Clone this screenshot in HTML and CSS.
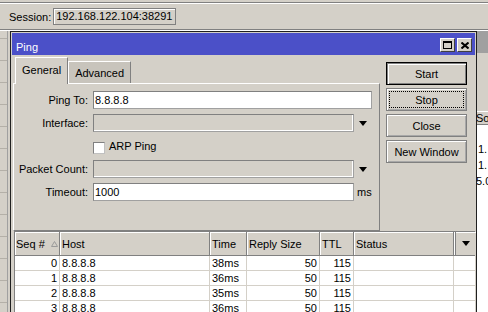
FILE: index.html
```html
<!doctype html>
<html>
<head>
<meta charset="utf-8">
<meta name="viewport" content="width=device-width,initial-scale=1">
<title>Ping</title>
<link rel="stylesheet" href="styles.css">
</head>
<body>
<div class="menubar"></div>
<div class="toolbar">
  <span class="session-label">Session:</span>
  <span class="session">192.168.122.104:38291</span>
</div>
<div class="desk">
  <div class="side-left">
    <div class="side-item first"></div>
    <div class="side-item"></div>
    <div class="side-item"></div>
    <div class="side-item"></div>
    <div class="side-item"></div>
    <div class="side-item"></div>
    <div class="side-item"></div>
    <div class="side-item"></div>
    <div class="side-item"></div>
    <div class="side-item"></div>
    <div class="side-item"></div>
    <div class="side-item"></div>
    <div class="side-item"></div>
  </div>
  <div class="side-right">
    <div class="bg-title"></div>
    <div class="bg-gap"></div>
    <div class="bg-head">Sou</div>
    <div class="bg-list">
      <div class="bg-row"></div>
      <div class="bg-row">1.</div>
      <div class="bg-row">1.</div>
      <div class="bg-row cut">5.0</div>
    </div>
  </div>

  <div class="win">
    <div class="titlebar">
      <span class="title">Ping</span>
      <span class="tbtn">
        <svg width="9" height="8" viewBox="0 0 9 8"><rect x="0.5" y="0.5" width="8" height="7" fill="none" stroke="#000"/><rect x="0" y="0" width="9" height="2" fill="#000"/></svg>
      </span>
      <span class="tbtn">
        <svg width="8" height="7" viewBox="0 0 8 7"><path d="M0.5 0.5 L7.5 6.5 M7.5 0.5 L0.5 6.5" stroke="#000" stroke-width="2"/></svg>
      </span>
    </div>
    <div class="win-body">
      <div class="top">
        <div class="tabs-area">
          <div class="tabs">
            <span class="tab active">General</span>
            <span class="tab">Advanced</span>
          </div>
          <div class="panel">
            <div class="frow">
              <label>Ping To:</label>
              <div class="field long">8.8.8.8</div>
            </div>
            <div class="frow">
              <label>Interface:</label>
              <div class="field off"></div>
              <span class="drop"></span>
            </div>
            <div class="frow">
              <label></label>
              <span class="check"></span>
              <span class="check-text">ARP Ping</span>
            </div>
            <div class="frow">
              <label>Packet Count:</label>
              <div class="field off"></div>
              <span class="drop"></span>
            </div>
            <div class="frow">
              <label>Timeout:</label>
              <div class="field">1000</div>
              <span class="unit">ms</span>
            </div>
          </div>
        </div>
        <div class="buttons">
          <div class="btn default">Start</div>
          <div class="btn focus">Stop</div>
          <div class="btn">Close</div>
          <div class="btn">New Window</div>
        </div>
      </div>

      <div class="grid">
        <div class="thead">
          <div class="th">Seq #
            <svg class="sort" width="7" height="6" viewBox="0 0 7 6"><path d="M3.5 0.5 L6.5 5.5 L0.5 5.5 Z" fill="#d4d0c8" stroke="#9a9a9a"/></svg>
          </div>
          <div class="th">Host</div>
          <div class="th">Time</div>
          <div class="th">Reply Size</div>
          <div class="th">TTL</div>
          <div class="th">Status</div>
          <div class="th last"><span class="drop"></span></div>
        </div>
        <div class="trow">
          <div class="td num">0</div><div class="td">8.8.8.8</div><div class="td">38ms</div>
          <div class="td num">50</div><div class="td num">115</div><div class="td"></div><div class="td"></div>
        </div>
        <div class="trow">
          <div class="td num">1</div><div class="td">8.8.8.8</div><div class="td">36ms</div>
          <div class="td num">50</div><div class="td num">115</div><div class="td"></div><div class="td"></div>
        </div>
        <div class="trow">
          <div class="td num">2</div><div class="td">8.8.8.8</div><div class="td">35ms</div>
          <div class="td num">50</div><div class="td num">115</div><div class="td"></div><div class="td"></div>
        </div>
        <div class="trow">
          <div class="td num">3</div><div class="td">8.8.8.8</div><div class="td">36ms</div>
          <div class="td num">50</div><div class="td num">115</div><div class="td"></div><div class="td"></div>
        </div>
      </div>
    </div>
  </div>
</div>
</body>
</html>
```

FILE: styles.css
```css
body {
    margin: 0;
    width: 488px;
    height: 312px;
    overflow: hidden;
    background: #d4d0c8;
    color: #000;
    font: 11px "Liberation Sans", Arial, sans-serif;
}
 .menubar {
    height: 2px;
    border-bottom: 1px solid #808080;
}
 .toolbar {
    height: 25px;
    border-top: 1px solid #fff;
    border-bottom: 1px solid #808080;
    display: flex;
    align-items: center;
    padding-left: 9px;
}
 .session {
    box-sizing: border-box;
    width: 123px;
    height: 17px;
    margin-left: 2px;
    padding-left: 2px;
    line-height: 15px;
    border: 1px solid #808080;
    box-shadow: inset 1px 1px #fff;
    white-space: nowrap;
    overflow: hidden;
}
 .desk {
    position: relative;
    height: 281px;
    border-top: 1px solid #fff;
    display: flex;
    overflow: hidden;
}
/* list of the main window, mostly hidden behind the dialog */
 .side-left {
    width: 7px;
    border-right: 1px solid #a0a0a0;
}
 .side-item {
    height: 21px;
    border-bottom: 1px solid #b4b0a8;
}
 .side-item.first {
    height: 7px;
}
 .side-right {
    margin-left: auto;
    width: 11px;
    display: flex;
    flex-direction: column;
}
 .bg-title {
    height: 22px;
    background: #a0a0a0;
}
 .bg-gap {
    height: 58px;
}
 .bg-head {
    box-sizing: border-box;
    height: 14px;
    line-height: 12px;
    border-top: 1px solid #fff;
    border-bottom: 1px solid #808080;
    white-space: nowrap;
    overflow: hidden;
    text-indent: -1px;
}
 .bg-list {
    flex: 1;
    background: #fff;
}
 .bg-row {
    height: 16px;
    line-height: 16px;
    padding-left: 1px;
    white-space: nowrap;
    overflow: hidden;
}
 .bg-row.cut {
    text-indent: -2px;
}
/* dialog */
 .win {
    position: absolute;
    left: 10px;
    top: 0;
    box-sizing: border-box;
    width: 467px;
    height: 300px;
    padding: 1px;
    border: 1px solid #202020;
    background: #d4d0c8;
}
 .titlebar {
    height: 22px;
    box-sizing: border-box;
    background: #4b50c8;
    color: #fff;
    display: flex;
    align-items: flex-end;
    gap: 2px;
    padding: 0 3px 3px 4px;
}
 .title {
    margin-right: auto;
    line-height: 14px;
    margin-bottom: -2px;
}
 .tbtn {
    box-sizing: border-box;
    width: 15px;
    height: 14px;
    background: #d4d0c8;
    border: 1px solid;
    border-color: #fff #404040 #404040 #fff;
    display: flex;
    align-items: center;
    justify-content: center;
}
 .win-body {
    padding-left: 1px;
}
 .top {
    display: flex;
}
 .tabs-area {
    width: 367px;
}
 .tabs {
    height: 28px;
    display: flex;
    align-items: flex-end;
    padding-left: 2px;
    box-sizing: border-box;
}
 .tab {
    box-sizing: border-box;
    height: 22px;
    padding: 1px 6px 0;
    display: flex;
    align-items: center;
    background: #c8c4bc;
    border: 1px solid;
    border-color: #fff #808080 transparent #fff;
    border-bottom: 0;
}
 .tab.active {
    position: relative;
    height: 27px;
    margin-bottom: -1px;
    padding-bottom: 4px;
    background: #d4d0c8;
}
 .panel {
    box-sizing: border-box;
    height: 148px;
    padding-top: 7px;
    border: 1px solid;
    border-color: #fff #808080 #808080 #fff;
}
 .frow {
    height: 18px;
    margin-bottom: 5px;
    display: flex;
    align-items: center;
}
 .frow label {
    width: 74px;
    margin-right: 5px;
    text-align: right;
    white-space: nowrap;
}
 .field {
    box-sizing: border-box;
    width: 261px;
    height: 18px;
    padding-left: 1px;
    line-height: 16px;
    background: #fff;
    border: 1px solid;
    border-color: #808080 #a0a0a0 #a0a0a0 #808080;
}
 .field.long {
    width: 279px;
}
 .field.off {
    background: #d4d0c8;
    box-shadow: inset -1px -1px #fff;
}
 .drop {
    width: 0;
    height: 0;
    margin-left: 5px;
    border-left: 4px solid transparent;
    border-right: 4px solid transparent;
    border-top: 5px solid #000;
}
 .unit {
    margin-left: 3px;
}
 .check {
    box-sizing: border-box;
    width: 12px;
    height: 12px;
    margin-top: 3px;
    background: #fff;
    border: 1px solid;
    border-color: #808080 #c0c0c0 #c0c0c0 #808080;
}
 .check-text {
    margin-left: 4px;
}
 .buttons {
    width: 81px;
    margin: 7px 0 0 6px;
    display: flex;
    flex-direction: column;
    gap: 3px;
}
 .btn {
    box-sizing: border-box;
    height: 23px;
    border: 1px solid #808080;
    box-shadow: inset 1px 1px #fff, inset -1px -1px #a8a8a8;
    display: flex;
    align-items: center;
    justify-content: center;
}
 .btn.default {
    border-color: #000;
    box-shadow: inset 1px 1px #808080, inset 2px 2px #fff, inset -1px -1px #808080;
}
 .btn.focus {
    outline: 1px dotted #000;
    outline-offset: -4px;
}
/* ping results */
 .grid {
    margin-left: 1px;
    border-top: 1px solid #808080;
    border-left: 1px solid #808080;
    background: #fff;
}
 .thead,
 .trow {
    display: grid;
    grid-template-columns: 45px 150px 37px 73px 34px 100px 22px;
}
 .thead {
    box-sizing: border-box;
    height: 24px;
    border-bottom: 1px solid #808080;
    background: #d4d0c8;
}
 .th {
    padding-left: 2px;
    border-right: 1px solid #808080;
    box-shadow: inset 1px 1px #fff;
    display: flex;
    align-items: center;
    white-space: nowrap;
}
 .th:first-child {
    padding-left: 1px;
}
 .sort {
    margin-left: 6px;
}
 .th.last {
    border-right: 0;
    border-left: 1px solid #fff;
    box-shadow: inset 1px 0 #808080, inset 0 1px #fff;
    padding-left: 3px;
}
 .th.last .drop {
    margin-left: 4px;
}
 .trow {
    height: 15px;
}
 .td {
    line-height: 14px;
    padding: 0 2px;
    border-right: 1px solid #d4d0c8;
    border-bottom: 1px solid #d4d0c8;
    white-space: nowrap;
}
 .td.num {
    text-align: right;
}
```
